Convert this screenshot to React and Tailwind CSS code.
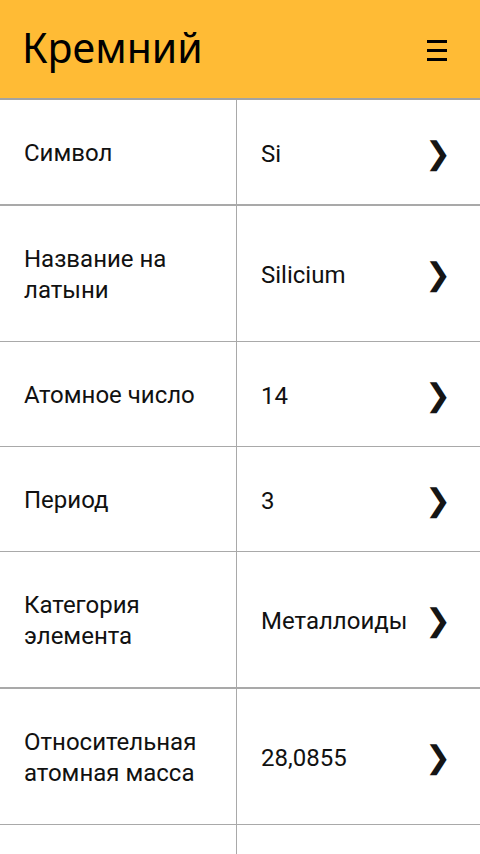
const rows = [
  { label: ['Символ'], value: 'Si', thick: true },
  { label: ['Название на', 'латыни'], value: 'Silicium' },
  { label: ['Атомное число'], value: '14' },
  { label: ['Период'], value: '3' },
  { label: ['Категория', 'элемента'], value: 'Металлоиды', thick: true },
  { label: ['Относительная', 'атомная масса'], value: '28,0855' },
];

function Row({ row }) {
  return (
    <div
      className={
        'flex border-[#a9a9a9] ' + (row.thick ? 'border-b-2' : 'border-b')
      }
    >
      <div className="w-[237px] shrink-0 border-r border-[#a9a9a9] pl-6 pr-2 pt-[38px] pb-[35px] text-[24px] leading-[31px] text-[#111]">
        {row.label.map((l) => (
          <div key={l}>{l}</div>
        ))}
      </div>
      <div className="flex flex-1 items-center justify-between pl-6 pr-[29px] pt-[4px] text-[24px] leading-[31px] text-[#111]">
        <span>{row.value}</span>
        <span className="-mt-[2px] font-['DejaVu_Sans',sans-serif] text-[31px] font-bold text-[#151515]">❯</span>
      </div>
    </div>
  );
}

export default function App() {
  return (
    <div className="h-[854px] overflow-hidden bg-white font-['Roboto',sans-serif]">
      <header className="flex h-[100px] items-center justify-between border-b-2 border-[#a3a3a3] bg-[#ffbb35] pl-[22px] pr-[33px]">
        <h1 className="-mt-1 font-['Noto_Sans',sans-serif] text-[41px] leading-none text-black">Кремний</h1>
        <div className="flex w-5 flex-col gap-[6px] pt-[2px]">
          <span className="block h-[3px] bg-black" />
          <span className="block h-[3px] bg-black" />
          <span className="block h-[3px] bg-black" />
        </div>
      </header>
      {rows.map((r) => (
        <Row key={r.label[0]} row={r} />
      ))}
      {/* next row, cut off by the screen edge */}
      <div className="flex h-[104px]">
        <div className="w-[237px] shrink-0 border-r border-[#a9a9a9]" />
      </div>
    </div>
  );
}
